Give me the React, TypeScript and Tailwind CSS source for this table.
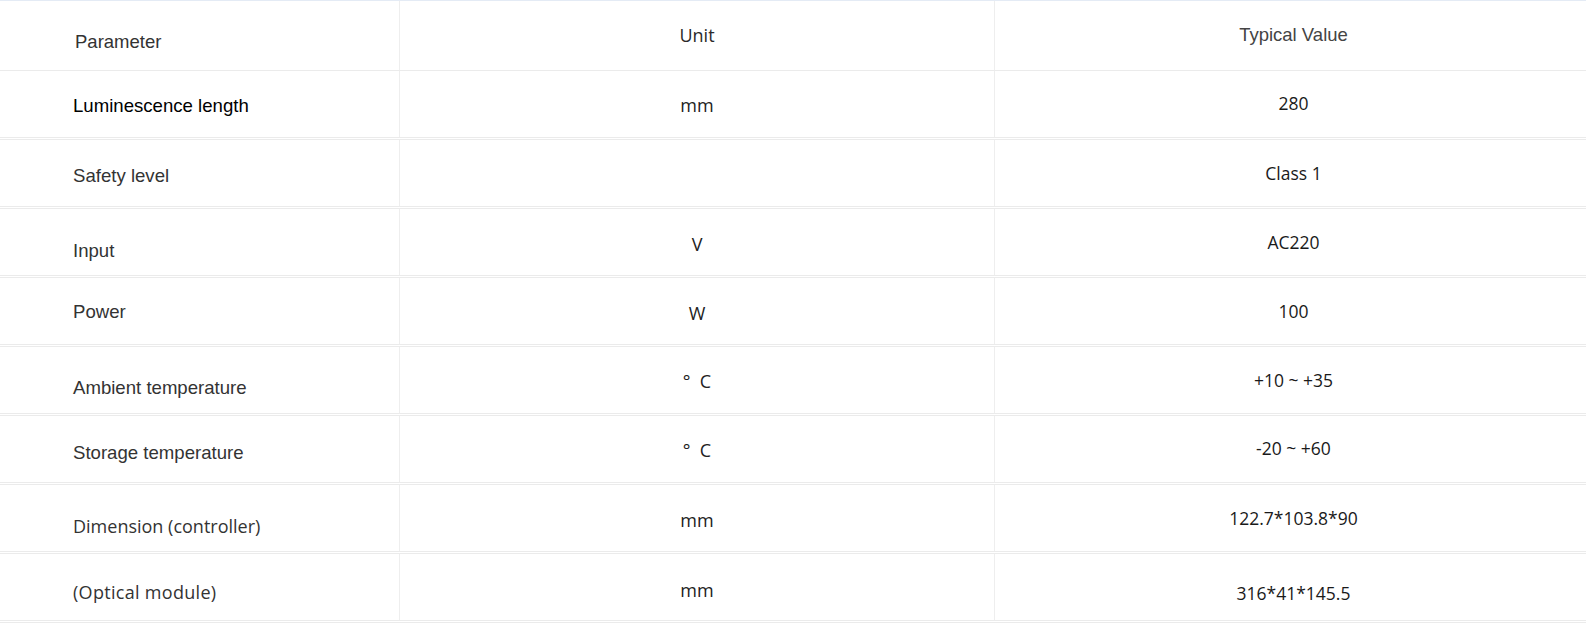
import React from 'react'

interface SpecRow {
  param: string
  unit: string
  value: string
  paramClass: string
  unitClass: string
  valueClass: string
}

// offsets are hand tuned per cell, the source table isn't perfectly aligned
const rows: SpecRow[] = [
  { param: 'Luminescence length', unit: 'mm', value: '280', paramClass: 'pt-[4px] text-black', unitClass: 'pt-[2px]', valueClass: 'pb-[2px]' },
  { param: 'Safety level', unit: '', value: 'Class 1', paramClass: 'pt-[6px]', unitClass: '', valueClass: '' },
  { param: 'Input', unit: 'V', value: 'AC220', paramClass: 'pt-[18px]', unitClass: 'pt-[4px]', valueClass: '' },
  { param: 'Power', unit: 'W', value: '100', paramClass: 'pt-[2px]', unitClass: 'pt-[4px]', valueClass: '' },
  { param: 'Ambient temperature', unit: '°  C', value: '+10 ~ +35', paramClass: 'pt-[16px]', unitClass: 'pt-[2px]', valueClass: '' },
  { param: 'Storage temperature', unit: '°  C', value: '-20 ~ +60', paramClass: 'pt-[8px]', unitClass: 'pt-[2px]', valueClass: 'pb-[2px]' },
  { param: 'Dimension (controller)', unit: 'mm', value: '122.7*103.8*90', paramClass: 'pt-[16px] font-["Open_Sans","Noto_Sans_CJK_SC",sans-serif] text-[18px]', unitClass: 'pt-[4px]', valueClass: '' },
  { param: '(Optical module)', unit: 'mm', value: '316*41*145.5', paramClass: 'pt-[10px] font-["Open_Sans","Noto_Sans_CJK_SC",sans-serif] text-[18px] tracking-[0.3px]', unitClass: 'pt-[6px]', valueClass: 'pt-[12px]' },
]

const arial = 'font-["Liberation_Sans",Arial,sans-serif]'
const sans = 'font-["Open_Sans","Noto_Sans_CJK_SC",sans-serif]'

const App: React.FC = () => {
  return (
    <div className="w-[1586px] h-[626px] bg-white overflow-hidden">
      <div className="border-t border-[#e4ebf5]">
        {/* header */}
        <div className="flex h-[70px] border-b border-[#ebebeb]">
          <div className={`w-[400px] shrink-0 flex items-center pl-[75px] pt-[12px] border-r border-[#eeeeee] text-[18.5px] text-[#333] ${arial}`}>
            Parameter
          </div>
          <div className={`w-[595px] shrink-0 flex items-center justify-center border-r border-[#eeeeee] text-[18px] text-[#2a2a2a] ${sans}`}>
            Unit
          </div>
          <div className={`flex-1 flex items-center justify-center pl-[6px] pb-[2px] text-[18.5px] text-[#444] ${arial}`}>
            Typical Value
          </div>
        </div>

        {rows.map((r, i) => (
          <div key={i} className="flex h-[69px] border-b-[3px] border-double border-[#ebebeb]">
            <div className={`w-[400px] shrink-0 flex items-center pl-[73px] border-r border-[#eeeeee] text-[18.6px] text-[#333] whitespace-pre ${arial} ${r.paramClass}`}>
              {r.param}
            </div>
            <div className={`w-[595px] shrink-0 flex items-center justify-center border-r border-[#eeeeee] text-[18px] text-[#222] whitespace-pre ${sans} ${r.unitClass}`}>
              {r.unit}
            </div>
            <div className={`flex-1 flex items-center justify-center pl-[6px] text-[17.5px] text-[#1a1a1a] ${sans} ${r.valueClass}`}>
              {r.value}
            </div>
          </div>
        ))}
      </div>
    </div>
  )
}

export default App
